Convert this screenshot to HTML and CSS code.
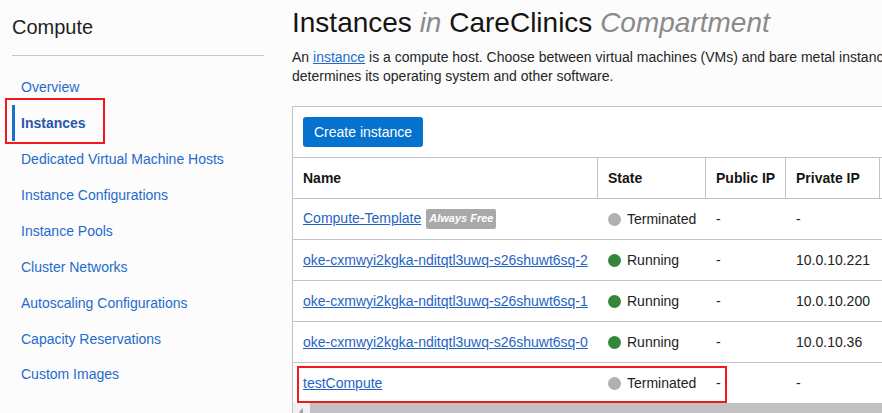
FILE: index.html
```html
<!DOCTYPE html>
<html lang="en">
<head>
<meta charset="utf-8">
<title>Instances</title>
<link rel="stylesheet" href="styles.css">
</head>
<body>
<div class="page">
  <aside class="sidebar">
    <h2 class="side-title">Compute</h2>
    <ul class="nav">
      <li><a class="nav-link" href="#">Overview</a></li>
      <li class="active"><a class="nav-link" href="#">Instances</a><span class="mark mark-nav"></span></li>
      <li><a class="nav-link" href="#">Dedicated Virtual Machine Hosts</a></li>
      <li><a class="nav-link" href="#">Instance Configurations</a></li>
      <li><a class="nav-link" href="#">Instance Pools</a></li>
      <li><a class="nav-link" href="#">Cluster Networks</a></li>
      <li><a class="nav-link" href="#">Autoscaling Configurations</a></li>
      <li class="tight"><a class="nav-link" href="#">Capacity Reservations</a></li>
      <li><a class="nav-link" href="#">Custom Images</a></li>
    </ul>
  </aside>
  <main class="main">
    <h1 class="title">Instances <em>in</em> CareClinics <em>Compartment</em></h1>
    <p class="intro">An <a href="#" class="inline-link">instance</a> is a compute host. Choose between virtual machines (VMs) and bare metal instanc<br>determines its operating system and other software.</p>
    <div class="panel">
      <div class="toolbar">
        <button class="btn-primary" type="button">Create instance</button>
      </div>
      <table class="grid">
        <colgroup>
          <col class="c-name"><col class="c-state"><col class="c-pub"><col class="c-priv"><col class="c-more">
        </colgroup>
        <thead>
          <tr><th>Name</th><th>State</th><th>Public IP</th><th>Private IP</th><th></th></tr>
        </thead>
        <tbody>
          <tr>
            <td><a href="#" class="row-link">Compute-Template</a><span class="badge">Always Free</span></td>
            <td><span class="dot dot-off"></span>Terminated</td>
            <td>-</td><td>-</td><td></td>
          </tr>
          <tr>
            <td><a href="#" class="row-link">oke-cxmwyi2kgka-nditqtl3uwq-s26shuwt6sq-2</a></td>
            <td><span class="dot dot-on"></span>Running</td>
            <td>-</td><td>10.0.10.221</td><td></td>
          </tr>
          <tr>
            <td><a href="#" class="row-link">oke-cxmwyi2kgka-nditqtl3uwq-s26shuwt6sq-1</a></td>
            <td><span class="dot dot-on"></span>Running</td>
            <td>-</td><td>10.0.10.200</td><td></td>
          </tr>
          <tr>
            <td><a href="#" class="row-link">oke-cxmwyi2kgka-nditqtl3uwq-s26shuwt6sq-0</a></td>
            <td><span class="dot dot-on"></span>Running</td>
            <td>-</td><td>10.0.10.36</td><td></td>
          </tr>
          <tr>
            <td><a href="#" class="row-link">testCompute</a></td>
            <td><span class="dot dot-off"></span>Terminated</td>
            <td>-</td><td>-</td><td></td>
          </tr>
        </tbody>
      </table>
      <div class="hscroll">
        <span class="hscroll-arrow"></span>
        <span class="hscroll-thumb"></span>
      </div>
      <span class="mark mark-row"></span>
    </div>
  </main>
</div>
</body>
</html>
```

FILE: styles.css
```css
* { box-sizing: border-box; }

html, body {
  margin: 0;
  padding: 0;
}

body {
  width: 882px;
  height: 413px;
  overflow: hidden;
  background: #fcfcfd;
  font-family: "Liberation Sans", Arial, sans-serif;
  font-size: 14px;
  color: #222;
}

.page {
  display: flex;
  align-items: flex-start;
}

.sidebar {
  flex: 0 0 264px;
  padding-left: 12px;
}

.side-title {
  margin: 15px 0 0;
  font-size: 20px;
  font-weight: normal;
  line-height: 24px;
  color: #1f1f1f;
  padding-bottom: 16px;
  border-bottom: 1px solid #c6c6ce;
}

.nav {
  list-style: none;
  margin: 0;
  padding: 13px 0 0;
}

.nav li {
  position: relative;
  height: 36px;
  line-height: 36px;
}

.nav li.tight {
  height: 35px;
}

.nav-link {
  display: block;
  height: 36px;
  padding-left: 6px;
  border-left: 3px solid transparent;
  color: #1f6bcc;
  text-decoration: none;
}

.nav li.active .nav-link {
  border-left-color: #1a6fd0;
  font-weight: bold;
  color: #2a57a8;
}

.mark {
  position: absolute;
  border: 2px solid #f01a1a;
  pointer-events: none;
}

.mark-nav {
  left: -7px;
  top: -7px;
  width: 100px;
  height: 46px;
}

.main {
  flex: 0 0 590px;
  margin-left: 28px;
  overflow: hidden;
}

.title {
  margin: 7px 0 0;
  font-size: 28px;
  font-weight: normal;
  line-height: 32px;
  color: #161513;
  white-space: nowrap;
}

.title em {
  color: #8a8a8a;
}

.intro {
  margin: 9px 0 0;
  line-height: 19px;
  color: #262626;
  white-space: nowrap;
}

.inline-link {
  color: #1f6bcc;
  text-decoration: underline;
}

.panel {
  position: relative;
  margin-top: 20px;
  width: 760px;
  background: #fff;
  border: 1px solid #bfc3cb;
  border-right: none;
}

.toolbar {
  padding: 10px;
  border-bottom: 1px solid #bfc3cb;
}

.btn-primary {
  display: block;
  width: 120px;
  height: 30px;
  border: none;
  border-radius: 3px;
  background: #0572ce;
  color: #fff;
  font-family: inherit;
  font-size: 14px;
  padding: 0;
}

.grid {
  table-layout: fixed;
  border-collapse: separate;
  border-spacing: 0;
  width: 737px;
}

.c-name { width: 305px; }
.c-state { width: 108px; }
.c-pub { width: 80px; }
.c-priv { width: 94px; }
.c-more { width: 150px; }

.grid th {
  height: 41px;
  padding: 0 10px;
  text-align: left;
  font-weight: bold;
  color: #161513;
  border-right: 1px solid #bfc3cb;
  border-bottom: 1px solid #bfc3cb;
  white-space: nowrap;
}

.grid td {
  height: 41px;
  padding: 0 10px;
  border-bottom: 1px solid #bfc3cb;
  white-space: nowrap;
  color: #222;
}

.grid tbody tr:first-child td {
  height: 41px;
}

.grid tbody tr:last-child td {
  border-bottom: none;
  height: 40px;
}

.row-link {
  color: #1f64c4;
  text-decoration: underline;
}

.badge {
  display: inline-block;
  vertical-align: 1px;
  margin-left: 5px;
  padding: 0 3px;
  height: 20px;
  line-height: 18px;
  border-radius: 2px;
  background: #a9a9a9;
  color: #fff;
  font-size: 11px;
  font-weight: bold;
  font-style: italic;
}

.dot {
  display: inline-block;
  width: 13px;
  height: 13px;
  border-radius: 50%;
  margin-right: 6px;
  vertical-align: -2px;
}

.dot-on { background: #35863a; }
.dot-off { background: #b0b0b0; }

.hscroll {
  display: flex;
  height: 17px;
  background: #f1f1f1;
}

.hscroll-arrow {
  flex: 0 0 17px;
  position: relative;
}

.hscroll-arrow::before {
  content: "";
  position: absolute;
  left: 6px;
  top: 5px;
  border-top: 4px solid transparent;
  border-bottom: 4px solid transparent;
  border-right: 4px solid #a3a3a3;
}

.hscroll-thumb {
  flex: 0 0 600px;
  background: #c1c1c1;
}

.mark-row {
  left: 4px;
  top: 259px;
  width: 430px;
  height: 37px;
}
```
